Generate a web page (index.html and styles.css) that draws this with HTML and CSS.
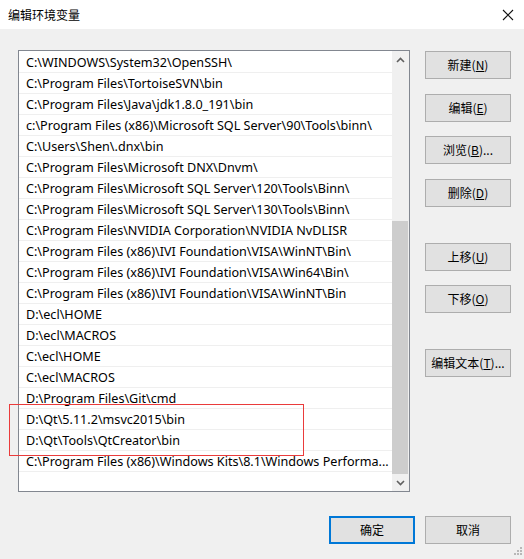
FILE: index.html
```html
<!DOCTYPE html>
<html lang="zh-CN">
<head>
<meta charset="utf-8">
<title>编辑环境变量</title>
<link rel="stylesheet" href="styles.css">
</head>
<body>
<div class="window">
  <div class="titlebar">
    <span class="title">编辑环境变量</span>
    <svg class="close" width="12" height="12" viewBox="0 0 12 12"><path d="M1 1 L11 11 M11 1 L1 11" stroke="#111" stroke-width="1.1" fill="none"/></svg>
  </div>
  <div class="main">
    <div class="listbox">
      <div class="rows">
        <div class="row">C:\WINDOWS\System32\OpenSSH\</div>
        <div class="row">C:\Program Files\TortoiseSVN\bin</div>
        <div class="row">C:\Program Files\Java\jdk1.8.0_191\bin</div>
        <div class="row">c:\Program Files (x86)\Microsoft SQL Server\90\Tools\binn\</div>
        <div class="row">C:\Users\Shen\.dnx\bin</div>
        <div class="row">C:\Program Files\Microsoft DNX\Dnvm\</div>
        <div class="row">C:\Program Files\Microsoft SQL Server\120\Tools\Binn\</div>
        <div class="row">C:\Program Files\Microsoft SQL Server\130\Tools\Binn\</div>
        <div class="row">C:\Program Files\NVIDIA Corporation\NVIDIA NvDLISR</div>
        <div class="row">C:\Program Files (x86)\IVI Foundation\VISA\WinNT\Bin\</div>
        <div class="row">C:\Program Files (x86)\IVI Foundation\VISA\Win64\Bin\</div>
        <div class="row">C:\Program Files (x86)\IVI Foundation\VISA\WinNT\Bin</div>
        <div class="row">D:\ecl\HOME</div>
        <div class="row">D:\ecl\MACROS</div>
        <div class="row">C:\ecl\HOME</div>
        <div class="row">C:\ecl\MACROS</div>
        <div class="row">D:\Program Files\Git\cmd</div>
        <div class="row">D:\Qt\5.11.2\msvc2015\bin</div>
        <div class="row">D:\Qt\Tools\QtCreator\bin</div>
        <div class="row">C:\Program Files (x86)\Windows Kits\8.1\Windows Performa...</div>
      </div>
      <div class="scrollbar">
        <div class="arrow"><svg width="9" height="6" viewBox="0 0 9 6"><path d="M1 5 L4.5 1.5 L8 5" stroke="#606060" stroke-width="1.6" fill="none"/></svg></div>
        <div class="track"><div class="thumb"></div></div>
        <div class="arrow"><svg width="9" height="6" viewBox="0 0 9 6"><path d="M1 1 L4.5 4.5 L8 1" stroke="#606060" stroke-width="1.6" fill="none"/></svg></div>
      </div>
    </div>
    <div class="side">
      <button class="btn">新建(<u>N</u>)</button>
      <button class="btn gap15">编辑(<u>E</u>)</button>
      <button class="btn gap14">浏览(<u>B</u>)...</button>
      <button class="btn gap15">删除(<u>D</u>)</button>
      <button class="btn gap36">上移(<u>U</u>)</button>
      <button class="btn gap14">下移(<u>O</u>)</button>
      <button class="btn gap36">编辑文本(<u>T</u>)...</button>
    </div>
  </div>
  <div class="footer">
    <button class="btn default">确定</button>
    <button class="btn">取消</button>
  </div>
  <div class="highlight"></div>
  <svg class="grip" width="12" height="12" viewBox="0 0 12 12">
    <rect x="9" y="1" width="2" height="2" fill="#b8b8b8"/>
    <rect x="6" y="4" width="2" height="2" fill="#b8b8b8"/>
    <rect x="9" y="4" width="2" height="2" fill="#b8b8b8"/>
    <rect x="3" y="7" width="2" height="2" fill="#b8b8b8"/>
    <rect x="6" y="7" width="2" height="2" fill="#b8b8b8"/>
    <rect x="9" y="7" width="2" height="2" fill="#b8b8b8"/>
  </svg>
</div>
</body>
</html>
```
FILE: styles.css
```css
* { box-sizing: border-box; }
html, body { margin: 0; padding: 0; }
body {
  background: #f0f0f0;
  font-family: "Noto Sans", "Noto Sans CJK SC", sans-serif;
  font-size: 12px;
  color: #000;
}
.window {
  position: relative;
  width: 524px;
  height: 559px;
  overflow: hidden;
}
.titlebar {
  height: 29px;
  background: #fff;
  display: flex;
  align-items: center;
  justify-content: space-between;
  padding: 0 10px 0 8px;
}
.title {
  font-family: "Noto Sans CJK SC", sans-serif;
  font-size: 12px;
  color: #000;
}
.close { display: block; }
.main {
  display: flex;
  gap: 15px;
  padding: 21px 0 0 18px;
}
.listbox {
  width: 392px;
  height: 442px;
  border: 1px solid #828790;
  background: #fff;
  display: flex;
}
.rows {
  flex: 1;
  padding-top: 1px;
  overflow: hidden;
}
.row {
  height: 21px;
  line-height: 21px;
  border-bottom: 1px solid #efefef;
  padding-left: 7px;
  white-space: nowrap;
  overflow: hidden;
  font-size: 12.6px;
}
.scrollbar {
  width: 17px;
  background: #f0f0f0;
  display: flex;
  flex-direction: column;
}
.arrow {
  height: 17px;
  display: flex;
  align-items: center;
  justify-content: center;
}
.track {
  flex: 1;
  display: flex;
  flex-direction: column;
  justify-content: flex-end;
  padding: 0 1px 0 0;
}
.thumb {
  height: 253px;
  background: #cdcdcd;
}
.side {
  display: flex;
  flex-direction: column;
  padding-top: 1px;
}
.btn {
  width: 86px;
  height: 28px;
  margin: 0;
  padding: 0;
  background: #e1e1e1;
  border: 1px solid #adadad;
  font-family: "Noto Sans CJK SC", sans-serif;
  font-size: 12px;
  color: #000;
  line-height: 1;
}
.btn u { text-underline-offset: 1px; }
.gap14 { margin-top: 14px; }
.gap15 { margin-top: 15px; }
.gap36 { margin-top: 36px; }
.footer {
  display: flex;
  justify-content: flex-end;
  gap: 10px;
  padding-right: 13px;
  margin-top: 24px;
}
.btn.default {
  border: 2px solid #0078d7;
}
.highlight {
  position: absolute;
  left: 9px;
  top: 404px;
  width: 295px;
  height: 52px;
  border: 1px solid #ea3b3b;
}
.grip {
  position: absolute;
  right: 1px;
  bottom: 1px;
}
```
